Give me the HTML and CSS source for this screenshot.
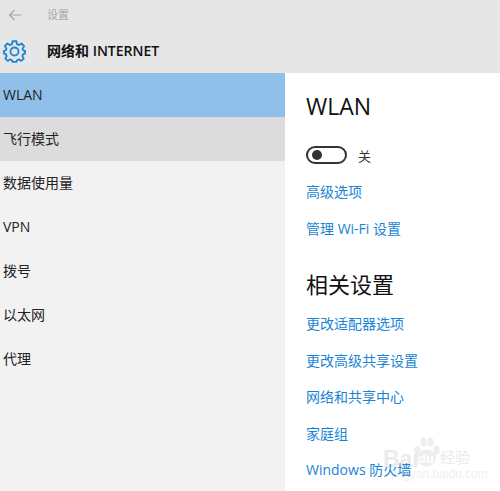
FILE: index.html
```html
<!doctype html>
<html lang="zh-CN">
  <head>
    <title>设置</title>
    <meta charset="UTF-8">
    <link rel="stylesheet" href="styles.css">
  </head>
  <body>
    <div class="header">
      <div class="titleRow">
        <svg class="backIcon" width="14" height="12" viewBox="0 0 14 12">
          <path d="M6.5 1 L1.5 6 L6.5 11 M1.5 6 H13.5" fill="none" stroke="#a6a6a6" stroke-width="1.2"/>
        </svg>
        <span class="appTitle">设置</span>
      </div>
      <div class="pageRow">
        <svg class="gearIcon" width="23" height="23" viewBox="0 0 24 24">
          <path d="M10 1.5 H14 L14.6 4.6 L16.8 5.5 L19.4 3.8 L22 6.6 L20.3 9.2 L21.2 11 L23 11.6 V14.4 L21 15 L20.2 17 L21.6 19.6 L19 22 L16.6 20.4 L14.6 21.3 L14 23 H10 L9.4 21.3 L7.4 20.4 L5 22 L2.4 19.6 L3.8 17 L3 15 L1 14.4 V11.6 L2.8 11 L3.7 9.2 L2 6.6 L4.6 3.8 L7.2 5.5 L9.4 4.6 Z" transform="translate(0 -0.2)" fill="none" stroke="#1a85d6" stroke-width="1.9" stroke-linejoin="round"/>
          <circle cx="12" cy="12" r="4.2" fill="none" stroke="#1a85d6" stroke-width="1.9"/>
        </svg>
        <span class="pageTitle">网络和 INTERNET</span>
      </div>
    </div>
    <div class="main">
      <div class="sidebar">
        <div class="navItem selected">WLAN</div>
        <div class="navItem hovered">飞行模式</div>
        <div class="navItem">数据使用量</div>
        <div class="navItem">VPN</div>
        <div class="navItem">拨号</div>
        <div class="navItem">以太网</div>
        <div class="navItem">代理</div>
      </div>
      <div class="content">
        <div class="heading">WLAN</div>
        <div class="toggleRow">
          <span class="toggle"><span class="knob"></span></span>
          <span class="toggleLabel">关</span>
        </div>
        <a class="link">高级选项</a>
        <a class="link">管理 Wi-Fi 设置</a>
        <div class="heading related">相关设置</div>
        <a class="link">更改适配器选项</a>
        <a class="link">更改高级共享设置</a>
        <a class="link">网络和共享中心</a>
        <a class="link">家庭组</a>
        <a class="link">Windows 防火墙</a>
      </div>
    </div>
    <div class="watermark">
      <span class="wmBrand">Bai</span>
      <svg class="wmPaw" width="27" height="30" viewBox="0 0 26 30">
        <ellipse cx="4" cy="13" rx="3" ry="4.5" fill="#eeeeee"/>
        <ellipse cx="10" cy="5" rx="3" ry="4.5" fill="#eeeeee"/>
        <ellipse cx="17" cy="5" rx="3" ry="4.5" fill="#eeeeee"/>
        <ellipse cx="23" cy="13" rx="3" ry="4.5" fill="#eeeeee"/>
        <ellipse cx="13" cy="21" rx="9.5" ry="8.5" fill="#eeeeee"/>
      </svg>
      <span class="wmDu">du</span>
      <span class="wmText">经验</span>
      <span class="wmUrl">jingyan.baidu.com</span>
    </div>
  </body>
</html>
```

FILE: styles.css
```css
html, body {
  margin: 0;
  height: 100%;
  overflow: hidden;
}

body {
  width: 500px;
  height: 491px;
  position: relative;
  display: flex;
  flex-direction: column;
  font-family: "Open Sans", "Noto Sans CJK SC", sans-serif;
  background-color: #fff;
  color: #1f1f1f;
}

.header {
  height: 73px;
  background-color: #e6e6e6;
  flex-shrink: 0;
}

.titleRow {
  display: flex;
  align-items: center;
  height: 29px;
  padding-left: 8px;
}

.appTitle {
  margin-left: 25px;
  font-size: 11px;
  line-height: 26px;
  color: #a8a8a8;
}

.pageRow {
  display: flex;
  align-items: center;
  height: 44px;
  padding-left: 3px;
}

.gearIcon {
  flex-shrink: 0;
}

.pageTitle {
  margin-left: 21px;
  font-size: 14px;
  line-height: 44px;
  font-weight: 600;
  color: #111;
}

.main {
  display: flex;
  flex: 1;
}

.sidebar {
  width: 285px;
  background-color: #f2f2f2;
  flex-shrink: 0;
}

.navItem {
  height: 44px;
  line-height: 43px;
  padding-left: 3px;
  font-size: 14px;
  color: #222;
}

.selected {
  background-color: #90c0e9;
}

.hovered {
  background-color: #dcdcdc;
}

.content {
  padding: 18px 0 0 21px;
  flex: 1;
}

.heading {
  font-size: 23px;
  line-height: 30px;
  color: #111;
}

.related {
  margin-top: 14px;
  margin-bottom: 15px;
  font-size: 22px;
}

.toggleRow {
  display: flex;
  align-items: center;
  height: 20px;
  margin-top: 24px;
  margin-bottom: 17px;
}

.toggle {
  display: flex;
  align-items: center;
  box-sizing: border-box;
  width: 41px;
  height: 18px;
  border: 2px solid #333;
  border-radius: 9px;
  padding-left: 4px;
}

.knob {
  width: 10px;
  height: 10px;
  border-radius: 50%;
  background-color: #333;
}

.toggleLabel {
  margin-left: 11px;
  font-size: 13px;
  color: #333;
}

.link {
  display: block;
  position: relative;
  z-index: 1;
  height: 36.5px;
  line-height: 20px;
  font-size: 14px;
  color: #1a85d6;
}

.watermark {
  position: absolute;
  left: 383px;
  top: 436px;
  width: 117px;
  height: 55px;
  color: #ebebeb;
}

.wmBrand {
  position: absolute;
  left: 0;
  top: 10px;
  font-family: "Liberation Sans", sans-serif;
  font-size: 23px;
  line-height: 26px;
  font-weight: 700;
}

.wmPaw {
  position: absolute;
  left: 30px;
  top: 1px;
}

.wmDu {
  position: absolute;
  left: 35px;
  top: 15px;
  font-family: "Liberation Sans", sans-serif;
  font-size: 13px;
  line-height: 16px;
  font-weight: 700;
  color: #fff;
}

.wmText {
  position: absolute;
  left: 57px;
  top: 11px;
  font-size: 15px;
  line-height: 20px;
}

.wmUrl {
  position: absolute;
  left: 8px;
  top: 31px;
  font-family: "Liberation Sans", sans-serif;
  font-size: 12px;
  line-height: 14px;
  color: #f0f0f0;
}
```
